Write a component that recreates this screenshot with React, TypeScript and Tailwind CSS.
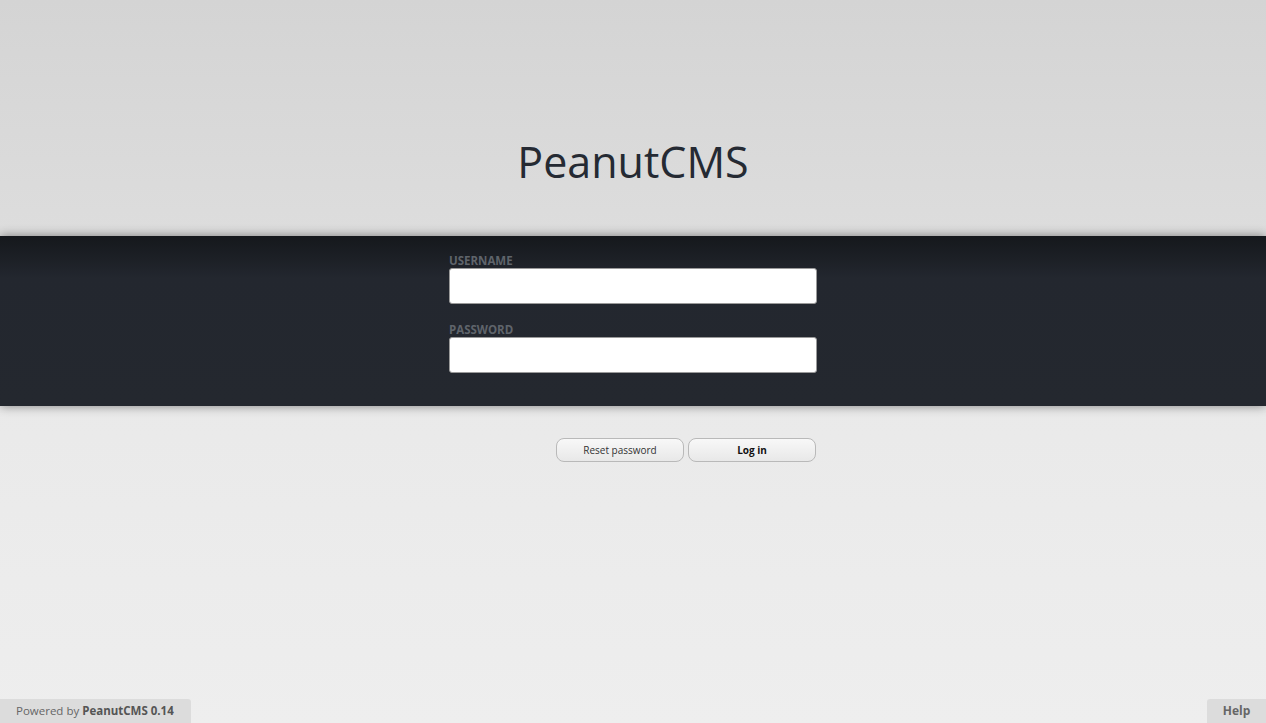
import React from "react";

export default function App() {
  return (
    <div
      className="relative flex h-[723px] w-[1266px] flex-col overflow-hidden bg-gradient-to-b from-[#e4e4e4] to-[#eeeeee]"
      style={{ fontFamily: '"Open Sans", "Noto Sans", sans-serif' }}
    >
      <div className="flex h-[236px] shrink-0 items-start justify-center bg-gradient-to-b from-[#d4d4d4] to-[#dddddd]">
        <h1 className="mt-[132px] text-[43px] font-normal leading-[60px] text-[#252a33]">PeanutCMS</h1>
      </div>
      <div className="relative z-10 h-[170px] shrink-0 bg-gradient-to-b from-[#15181c] via-[#23272f] via-[25%] to-[#24282f] shadow-[0_0_10px_rgba(0,0,0,0.45)]">
        <div className="mx-auto flex w-[368px] flex-col pt-[18px]">
          <label className="text-[11.5px] font-bold leading-[14px] text-[#5f646b]">USERNAME</label>
          <input className="h-[36px] rounded-[3px] border border-[#9a9a9a] bg-white px-2 outline-none" />
          <label className="mt-[19px] text-[11.5px] font-bold leading-[14px] text-[#5f646b]">PASSWORD</label>
          <input type="password" className="h-[36px] rounded-[3px] border border-[#9a9a9a] bg-white px-2 outline-none" />
        </div>
      </div>
      <div className="mx-auto flex w-[368px] justify-end gap-[4px] pt-[32px] pr-[1px]">
        <button className="h-[24px] w-[128px] rounded-[8px] border border-[#b9b9b9] bg-gradient-to-b from-[#f8f8f8] to-[#e8e8e8] text-[10px] text-[#333]">
          Reset password
        </button>
        <button className="h-[24px] w-[128px] rounded-[8px] border border-[#b9b9b9] bg-gradient-to-b from-[#f8f8f8] to-[#e8e8e8] text-[10px] font-bold text-[#111]">
          Log in
        </button>
      </div>
      <div className="absolute bottom-0 left-0 flex h-[24px] w-[191px] items-center rounded-tr-[3px] bg-[#dcdcdc] pl-[16px] text-[11.5px] text-[#666]">
        Powered by&nbsp;<span className="font-bold text-[#555]">PeanutCMS 0.14</span>
      </div>
      <div className="absolute bottom-0 right-0 flex h-[24px] w-[59px] items-center justify-center rounded-tl-[3px] bg-[#dcdcdc] text-[12px] font-bold text-[#666]">
        Help
      </div>
    </div>
  );
}
